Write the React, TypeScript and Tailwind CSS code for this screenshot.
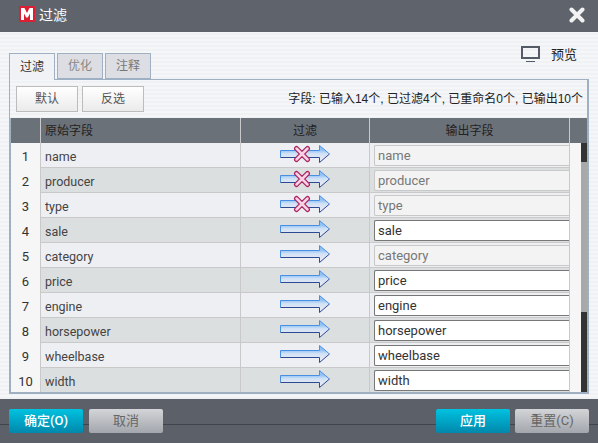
import React from 'react';

const FONT = "font-['Roboto','Noto_Sans_CJK_SC',sans-serif]";

const rows = [
  { name: 'name', filtered: true, crossed: true },
  { name: 'producer', filtered: true, crossed: true },
  { name: 'type', filtered: true, crossed: true },
  { name: 'sale', filtered: false, crossed: false },
  { name: 'category', filtered: true, crossed: false },
  { name: 'price', filtered: false, crossed: false },
  { name: 'engine', filtered: false, crossed: false },
  { name: 'horsepower', filtered: false, crossed: false },
  { name: 'wheelbase', filtered: false, crossed: false },
  { name: 'width', filtered: false, crossed: false },
];

function Arrow({ crossed }: { crossed: boolean }) {
  return (
    <svg width="50" height="18" viewBox="0 0 50 18" fill="none">
      <defs>
        <linearGradient id="arrowFill" gradientUnits="userSpaceOnUse" x1="0" y1="5" x2="0" y2="13">
          <stop offset="0" stopColor="#8fc1f5" />
          <stop offset="0.45" stopColor="#cfe1f6" />
          <stop offset="1" stopColor="#e4e8f2" />
        </linearGradient>
      </defs>
      <path d="M0.5 5.5H39.5V0.5L49.5 9L39.5 17.5V12.5H0.5Z" fill="url(#arrowFill)" />
      <path d="M0.5 12.5V5.5H39.5V0.5L49.5 9" stroke="#4a90e2" strokeWidth="1" />
      <path d="M0.5 12.5H39.5V17.5L49.5 9" stroke="#2c4a94" strokeWidth="1" />
      {crossed && (
        <>
          <path d="M16.5 3.5L27.5 14.5M27.5 3.5L16.5 14.5" stroke="#a8215f" strokeWidth="5" strokeLinecap="round" />
          <path d="M16.5 3.5L27.5 14.5M27.5 3.5L16.5 14.5" stroke="#fad2e4" strokeWidth="2.5" strokeLinecap="round" />
        </>
      )}
    </svg>
  );
}

export default function App() {
  return (
    <div className={`${FONT} w-[598px] h-[443px] flex flex-col overflow-hidden bg-[repeating-linear-gradient(0deg,#f0f1f4_0px,#f0f1f4_2px,#f5f6f8_2px,#f5f6f8_4px)]`}>
      <div className="h-[32px] shrink-0 bg-[#5f646c] flex items-center pl-[19px] pr-[13px] pb-[2px]">
        <div className="w-[16px] h-[16px] mb-[2px] bg-[#dc1f33] rounded-[1px] flex items-center justify-center">
          <svg width="14" height="12" viewBox="0 0 14 12">
            <path d="M1 12V0H4.5L7 5L9.5 0H13V12H10V5.5L7.8 9.5H6.2L4 5.5V12Z" fill="#fff" />
          </svg>
        </div>
        <span className="ml-[4px] text-[14px] text-white">过滤</span>
        <svg className="ml-auto" width="16" height="16" viewBox="0 0 16 16">
          <path d="M2.5 2.5L13.5 13.5M13.5 2.5L2.5 13.5" stroke="#f2f2f2" strokeWidth="4" strokeLinecap="round" />
        </svg>
      </div>

      <div className="flex-1 min-h-0 pl-[9px] pr-[9px] pt-[21px] flex flex-col">
        <div className="h-[26px] shrink-0 flex items-start relative">
          <div className="flex gap-[2px] h-[27px] z-10">
            <div className="w-[46px] border border-b-0 border-[#9fb0c2] bg-[#f1f2f5] flex items-center justify-center text-[12px] text-[#333]">过滤</div>
            <div className="w-[46px] h-[26px] border border-[#9fb0c2] bg-[#dcdee3] flex items-center justify-center text-[12px] text-[#888]">优化</div>
            <div className="w-[46px] h-[26px] border border-[#9fb0c2] bg-[#dcdee3] flex items-center justify-center text-[12px] text-[#777]">注释</div>
          </div>
          <div className="ml-auto flex items-center -mt-[8px] pr-[12px]">
            <svg width="19" height="17" viewBox="0 0 19 17" fill="none">
              <rect x="1" y="1" width="17" height="11" stroke="#555b66" strokeWidth="2" />
              <path d="M5 15.5H14" stroke="#555b66" strokeWidth="1" />
            </svg>
            <span className="ml-[11px] text-[13px] text-[#222]">预览</span>
          </div>
        </div>

        <div className="h-[315px] shrink-0 border border-[#9fb0c2] border-r-[2px] border-b-[2px] flex flex-col">
          <div className="h-[38px] shrink-0 flex items-center pl-[6px] pr-[4px]">
            <button className="w-[62px] h-[26px] border border-[#bcbcbc] bg-gradient-to-b from-white to-[#ebebeb] text-[12px] text-[#555]">默认</button>
            <button className="ml-[4px] w-[62px] h-[26px] border border-[#bcbcbc] bg-gradient-to-b from-white to-[#ebebeb] text-[12px] text-[#555]">反选</button>
            <span className="ml-auto font-['Liberation_Sans','Noto_Sans_CJK_SC',sans-serif] text-[12px] text-[#222] whitespace-nowrap">字段: 已输入14个, 已过滤4个, 已重命名0个, 已输出10个</span>
          </div>

          <div className="flex-1 min-h-0 relative overflow-hidden border-l border-[#9fb0c2]">
            <div className="h-[25px] bg-[#6b7179] grid grid-cols-[30px_200px_129px_200px_1fr] text-[12px] text-[#222] leading-[26px]">
              <div className="border-r border-[#c9c9c9]" />
              <div className="border-r border-[#c9c9c9] pl-[4px]">原始字段</div>
              <div className="border-r border-[#c9c9c9] text-center">过滤</div>
              <div className="border-r border-[#c9c9c9] text-center">输出字段</div>
              <div />
            </div>
            {rows.map((row, i) => (
              <div
                key={row.name}
                className={`h-[25px] grid grid-cols-[30px_200px_129px_200px_1fr] border-b border-[#c9c9c9] text-[12.5px] text-[#444] ${i % 2 === 0 ? 'bg-[#eeeff2]' : 'bg-[#dcdfe0]'}`}
              >
                <div className="bg-[#f6f6f6] border-r border-[#c9c9c9] text-center leading-[27px] text-[13px] text-[#333]">{i + 1}</div>
                <div className="border-r border-[#c9c9c9] pl-[4px] leading-[27px]">{row.name}</div>
                <div className="border-r border-[#c9c9c9] flex justify-center pt-[2px]">
                  <Arrow crossed={row.crossed} />
                </div>
                <div className="border-r border-[#c9c9c9] pl-[4px] pt-[2px]">
                  <div
                    className={`w-full h-[21px] rounded-l-[2px] border-y border-l pl-[3px] leading-[19px] text-[13px] ${
                      row.filtered ? 'bg-[#f3f3f3] border-[#c8c8c8] text-[#777]' : 'bg-white border-[#777] text-[#333]'
                    }`}
                  >
                    {row.name}
                  </div>
                </div>
                <div className="bg-[#f6f6f6]" />
              </div>
            ))}
            <div className="absolute right-0 top-[25px] bottom-0 w-[6px] bg-[#333]">
              <div className="absolute left-0 right-0 top-[19px] h-[150px] bg-[#a9a9a9]" />
            </div>
          </div>
        </div>
      </div>

      <div className="h-[44px] shrink-0 bg-[#5c6068] relative flex items-center px-[9px]">
        <div className="absolute left-0 right-0 top-[25px] h-px bg-[#40444b]" />
        <button className="relative w-[74px] h-[24px] rounded-[2px] bg-gradient-to-b from-[#00c2e0] to-[#0088ac] text-[13px] font-medium text-white">确定(O)</button>
        <button className="relative ml-[6px] w-[74px] h-[24px] rounded-[2px] bg-gradient-to-b from-[#d3d5d8] to-[#a3a6ac] text-[13px] text-[#666]">取消</button>
        <button className="relative ml-auto w-[74px] h-[24px] rounded-[2px] bg-gradient-to-b from-[#00c2e0] to-[#0088ac] text-[13px] font-medium text-white">应用</button>
        <button className="relative ml-[5px] w-[74px] h-[24px] rounded-[2px] bg-gradient-to-b from-[#d3d5d8] to-[#a3a6ac] text-[13px] text-[#666]">重置(C)</button>
      </div>
    </div>
  );
}
